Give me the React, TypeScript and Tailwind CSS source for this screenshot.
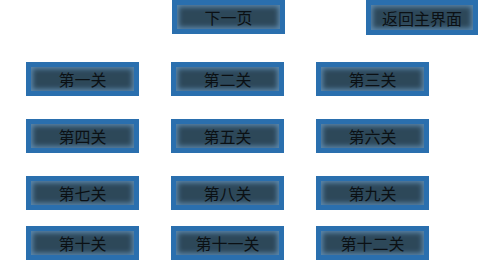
const LEVELS = [
  ['第一关', '第二关', '第三关'],
  ['第四关', '第五关', '第六关'],
  ['第七关', '第八关', '第九关'],
  ['第十关', '第十一关', '第十二关'],
];

function PanelButton({ label, className = '' }: { label: string; className?: string }) {
  return (
    <button
      type="button"
      className={`h-[34px] bg-[#2a6fae] p-[5px] flex ${className}`}
    >
      <span className="flex-1 flex items-center justify-center bg-[#2d4859] shadow-[inset_0_0_5px_2px_#5a86ab] text-[16px] leading-none text-[#0b1014]">
        {label}
      </span>
    </button>
  );
}

export default function App() {
  return (
    <div
      className="w-[480px] h-[270px] bg-white overflow-hidden"
      style={{ fontFamily: '"Noto Sans CJK SC", "Noto Sans", sans-serif' }}
    >
      <div className="flex h-[35px]">
        <PanelButton label="下一页" className="ml-[172px] w-[113px]" />
        <PanelButton label="返回主界面" className="ml-[81px] w-[112px] h-[35px]" />
      </div>
      <div className="flex flex-col pl-[26px] pt-[27px]">
        {LEVELS.map((row, i) => (
          <div
            key={i}
            className={`flex gap-[32px] ${i === 1 || i === 2 ? 'mt-[23px]' : i === 3 ? 'mt-[16px]' : ''}`}
          >
            {row.map((label) => (
              <PanelButton key={label} label={label} className="w-[113px]" />
            ))}
          </div>
        ))}
      </div>
    </div>
  );
}
